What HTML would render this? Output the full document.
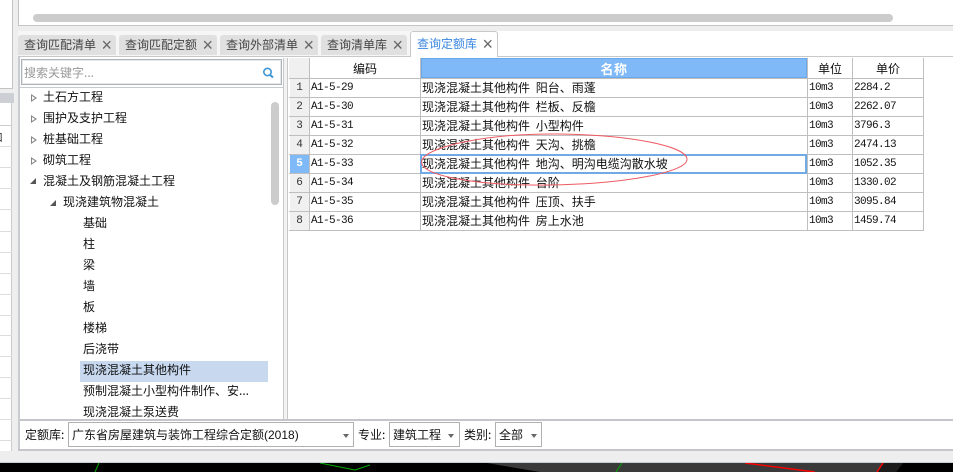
<!DOCTYPE html>
<html><head><meta charset="utf-8">
<style>
html,body{margin:0;padding:0;background:#fff}
#p{position:relative;width:953px;height:472px;overflow:hidden;background:#fff;font:12px/16px "WenQuanYi Zen Hei","Noto Sans CJK SC",sans-serif;color:#111}
#p div{position:absolute;box-sizing:border-box;white-space:nowrap}
.tab{top:35px;height:20px;background:#e0e0e0;border-radius:3px 3px 0 0;color:#444;padding:2px 0 0 6px;font-size:12px}
.tab b{position:absolute;top:1px;right:4px;font:400 18px/18px "Liberation Sans",sans-serif;color:#666}
.ti{left:0;height:21px;line-height:20px}
.h{background:#bfbfbf;height:1px}
.v{background:#bfbfbf;width:1px}
.rh{left:290px;width:19px;text-align:center;font:11px/19px "Liberation Mono",monospace;color:#333;background:#f0f0f0;height:18px}
.c{font:11px/19px "Liberation Mono",monospace;letter-spacing:-.6px;height:19px;margin-top:1px}
.n{left:422px;font-size:12px;line-height:18px;height:19px;word-spacing:3px}
.hd{top:59px;height:20px;line-height:20px;text-align:center;font-size:12px}
.sel{background:#fff;border:1px solid #b0b0b0;top:422px;height:25px;line-height:23px;padding-left:3px}
.ar{width:0;height:0;border:3px solid transparent;border-top:4px solid #666;border-bottom:0}
.o{width:0;height:0;border-left:6px solid #888;border-top:4px solid transparent;border-bottom:4px solid transparent}
.o::after{content:"";position:absolute;left:-5px;top:-2px;border-left:3px solid #fff;border-top:2px solid transparent;border-bottom:2px solid transparent}
.d{width:0;height:0;border-bottom:6px solid #555;border-left:6px solid transparent}
</style></head><body>
<div id="p">
<!-- far-left strip -->
<div style="left:0;top:0;width:18px;height:463px;background:#eee"></div>
<div style="left:0;top:0;width:13px;height:89px;background:#fff;border-right:1px solid #c4c4c4;border-bottom:1px solid #c4c4c4"></div>
<div style="left:0;top:93px;width:14px;height:10px;background:#ccd0d4"></div>
<div style="left:0;top:103px;width:12px;height:360px;background:#fff;border-right:1px solid #ccc"></div>
<div style="left:0;top:125px;width:12px;height:1px;background:#ccc"></div>
<div style="left:0;top:146px;width:12px;height:1px;background:#ddd"></div>
<div style="left:0;top:167px;width:12px;height:1px;background:#ddd"></div>
<div style="left:0;top:188px;width:12px;height:1px;background:#ddd"></div>
<div style="left:0;top:209px;width:12px;height:1px;background:#ddd"></div>
<div style="left:0;top:231px;width:12px;height:1px;background:#ddd"></div>
<div style="left:0;top:252px;width:12px;height:1px;background:#ddd"></div>
<div style="left:0;top:273px;width:12px;height:1px;background:#ddd"></div>
<div style="left:0;top:294px;width:12px;height:1px;background:#ddd"></div>
<div style="left:0;top:315px;width:12px;height:1px;background:#ddd"></div>
<div style="left:0;top:335px;width:12px;height:1px;background:#ddd"></div>
<div style="left:0;top:356px;width:12px;height:1px;background:#ddd"></div>
<div style="left:0;top:377px;width:12px;height:1px;background:#ddd"></div>
<div style="left:0;top:398px;width:12px;height:1px;background:#ddd"></div>
<div style="left:0;top:419px;width:12px;height:1px;background:#ddd"></div>
<div style="left:0;top:440px;width:12px;height:1px;background:#ddd"></div>
<div style="left:-8px;top:131px;font-size:11px;line-height:12px;color:#333">口</div>
<!-- top panel -->
<div style="left:18px;top:0;width:935px;height:26px;background:#fff;border-left:1px solid #c4c4c4;border-bottom:1px solid #c4c4c4"></div>
<div style="left:33px;top:14px;width:860px;height:8px;background:#ccc;border-radius:4px"></div>
<div style="left:18px;top:26px;width:935px;height:5px;background:#eee"></div>
<div style="left:18px;top:31px;width:392px;height:25px;background:#f6f6f6"></div>
<!-- tabs -->
<div class="tab" style="left:18px;width:98px">查询匹配清单<b>×</b></div>
<div class="tab" style="left:119px;width:98px">查询匹配定额<b>×</b></div>
<div class="tab" style="left:220px;width:98px">查询外部清单<b>×</b></div>
<div class="tab" style="left:321px;width:86px">查询清单库<b>×</b></div>
<div class="tab" style="left:410px;top:31px;width:88px;height:26px;background:#fff;border:1px solid #c8c8c8;border-bottom:0;color:#3a86e0;padding:4px 0 0 6px">查询定额库<b style="top:3px">×</b></div>
<div style="left:18px;top:56px;width:392px;height:2px;background:#c8c8c8"></div>
<div style="left:498px;top:56px;width:455px;height:2px;background:#c8c8c8"></div>
<!-- main -->
<div style="left:18px;top:57px;width:935px;height:393px;background:#fff;border-left:2px solid #c8ccd0"></div>
<!-- tree -->
<div style="left:283px;top:58px;width:5px;height:361px;background:#f2f2f2;border-left:1px solid #c8c8c8;border-right:1px solid #c8c8c8"></div>
<div style="left:21px;top:59px;width:261px;height:26px;border:1px solid #aab2ba;box-shadow:inset 0 0 0 1px #e8e8e8;color:#999;padding:5px 0 0 2px">搜索关键字...</div>
<svg style="position:absolute;left:261px;top:66px" width="14" height="14" viewBox="0 0 14 14"><circle cx="6.5" cy="6" r="3.7" fill="none" stroke="#3f97d6" stroke-width="1.6"/><path d="M9 8.8L12 11.5" stroke="#3f97d6" stroke-width="2"/></svg>
<div style="left:20px;top:87px;width:263px;height:1px;background:#c8ccd0"></div>
<div style="left:271px;top:102px;width:8px;height:103px;background:#ccc;border-radius:4px"></div>
<div style="left:80px;top:361px;width:188px;height:21px;background:#c7d8ef"></div>
<div class="o" style="left:31px;top:94px"></div><div class="ti" style="left:43px;top:87px">土石方工程</div>
<div class="o" style="left:31px;top:115px"></div><div class="ti" style="left:43px;top:108px">围护及支护工程</div>
<div class="o" style="left:31px;top:136px"></div><div class="ti" style="left:43px;top:129px">桩基础工程</div>
<div class="o" style="left:31px;top:157px"></div><div class="ti" style="left:43px;top:150px">砌筑工程</div>
<div class="d" style="left:30px;top:178px"></div><div class="ti" style="left:43px;top:171px">混凝土及钢筋混凝土工程</div>
<div class="d" style="left:50px;top:200px"></div><div class="ti" style="left:63px;top:192px">现浇建筑物混凝土</div>
<div class="ti" style="left:83px;top:213px">基础</div>
<div class="ti" style="left:83px;top:234px">柱</div>
<div class="ti" style="left:83px;top:255px">梁</div>
<div class="ti" style="left:83px;top:276px">墙</div>
<div class="ti" style="left:83px;top:297px">板</div>
<div class="ti" style="left:83px;top:318px">楼梯</div>
<div class="ti" style="left:83px;top:339px">后浇带</div>
<div class="ti" style="left:83px;top:360px">现浇混凝土其他构件</div>
<div class="ti" style="left:83px;top:381px">预制混凝土小型构件制作、安...</div>
<div class="ti" style="left:83px;top:402px;height:17px;overflow:hidden">现浇混凝土泵送费</div>
<!-- grid -->
<div style="left:289px;top:58px;width:20px;height:20px;background:#f0f0f0"></div>
<div style="left:421px;top:58px;width:386px;height:20px;background:#7fb9f8;border:1px solid #6aa8ea"></div>
<div class="hd" style="left:310px;width:110px">编码</div>
<div class="hd" style="left:421px;width:386px;color:#fff;font-weight:700;font-size:13px;letter-spacing:.5px;font-family:'Noto Sans CJK SC',sans-serif">名称</div>
<div class="hd" style="left:808px;width:44px">单位</div>
<div class="hd" style="left:853px;width:70px">单价</div>
<div class="rh" style="top:79px">1</div><div class="rh" style="top:98px">2</div><div class="rh" style="top:117px">3</div><div class="rh" style="top:136px">4</div>
<div class="rh" style="top:155px;background:#7fb9f8;color:#fff;font-weight:700">5</div>
<div class="rh" style="top:174px">6</div><div class="rh" style="top:193px">7</div><div class="rh" style="top:212px">8</div>
<div class="h" style="left:289px;top:78px;width:635px"></div>
<div class="h" style="left:289px;top:97px;width:635px"></div>
<div class="h" style="left:289px;top:116px;width:635px"></div>
<div class="h" style="left:289px;top:135px;width:635px"></div>
<div class="h" style="left:289px;top:154px;width:635px"></div>
<div class="h" style="left:289px;top:173px;width:635px"></div>
<div class="h" style="left:289px;top:192px;width:635px"></div>
<div class="h" style="left:289px;top:211px;width:635px"></div>
<div class="h" style="left:289px;top:230px;width:635px"></div>
<div class="v" style="left:309px;top:58px;height:173px"></div>
<div class="v" style="left:420px;top:58px;height:173px"></div>
<div class="v" style="left:807px;top:58px;height:173px"></div>
<div class="v" style="left:852px;top:58px;height:173px"></div>
<div class="v" style="left:923px;top:58px;height:173px"></div>
<div style="left:420px;top:154px;width:387px;height:20px;border:2px solid #6fa9e6"></div>

<div class="c" style="left:311px;top:78px">A1-5-29</div><div class="n" style="top:79px">现浇混凝土其他构件 阳台、雨蓬</div><div class="c" style="left:809px;top:78px">10m3</div><div class="c" style="left:854px;top:78px">2284.2</div>
<div class="c" style="left:311px;top:97px">A1-5-30</div><div class="n" style="top:98px">现浇混凝土其他构件 栏板、反檐</div><div class="c" style="left:809px;top:97px">10m3</div><div class="c" style="left:854px;top:97px">2262.07</div>
<div class="c" style="left:311px;top:116px">A1-5-31</div><div class="n" style="top:117px">现浇混凝土其他构件 小型构件</div><div class="c" style="left:809px;top:116px">10m3</div><div class="c" style="left:854px;top:116px">3796.3</div>
<div class="c" style="left:311px;top:135px">A1-5-32</div><div class="n" style="top:136px">现浇混凝土其他构件 天沟、挑檐</div><div class="c" style="left:809px;top:135px">10m3</div><div class="c" style="left:854px;top:135px">2474.13</div>
<div class="c" style="left:311px;top:154px">A1-5-33</div><div class="n" style="top:155px">现浇混凝土其他构件 地沟、明沟电缆沟散水坡</div><div class="c" style="left:809px;top:154px">10m3</div><div class="c" style="left:854px;top:154px">1052.35</div>
<div class="c" style="left:311px;top:173px">A1-5-34</div><div class="n" style="top:174px">现浇混凝土其他构件 台阶</div><div class="c" style="left:809px;top:173px">10m3</div><div class="c" style="left:854px;top:173px">1330.02</div>
<div class="c" style="left:311px;top:192px">A1-5-35</div><div class="n" style="top:193px">现浇混凝土其他构件 压顶、扶手</div><div class="c" style="left:809px;top:192px">10m3</div><div class="c" style="left:854px;top:192px">3095.84</div>
<div class="c" style="left:311px;top:211px">A1-5-36</div><div class="n" style="top:212px">现浇混凝土其他构件 房上水池</div><div class="c" style="left:809px;top:211px">10m3</div><div class="c" style="left:854px;top:211px">1459.74</div>
<svg style="position:absolute;left:0;top:0" width="953" height="472"><path d="M422 160C428 146 490 133 560 134C630 135 686 146 687 159C688 172 625 184 550 185C480 186 416 176 422 160Z" fill="none" stroke="#ee5a62" stroke-width="1"/></svg>
<!-- bottom -->
<div style="left:20px;top:419px;width:933px;height:2px;background:#c4c6ca"></div>
<div style="left:25px;top:427px">定额库:</div>
<div class="sel" style="left:68px;width:286px">广东省房屋建筑与装饰工程综合定额<span style="font-family:'Liberation Sans',sans-serif">(2018)</span></div>
<div class="ar" style="left:343px;top:434px"></div>
<div style="left:358px;top:427px">专业:</div>
<div class="sel" style="left:389px;width:71px">建筑工程</div>
<div class="ar" style="left:448px;top:434px"></div>
<div style="left:464px;top:427px">类别:</div>
<div class="sel" style="left:495px;width:47px">全部</div>
<div class="ar" style="left:531px;top:434px"></div>
<div style="left:18px;top:449px;width:935px;height:2px;background:#c4c6ca"></div>
<div style="left:0;top:451px;width:953px;height:12px;background:#eee"></div>
<div style="left:0;top:462px;width:953px;height:1px;background:#c8ccd4"></div>
<div style="left:0;top:463px;width:953px;height:9px;background:#000"></div>
<svg style="position:absolute;left:0;top:463px" width="953" height="9"><path d="M487 0L903 0L896 9L540 9Z" fill="#3a3a3a"/><path d="M883 0L903 0L896 9L877 9Z" fill="#1c1c1c"/><path d="M745 0L815 9" stroke="#f00" stroke-width="1.4"/><path d="M883 0L877 9" stroke="#f00" stroke-width="1.4"/><path d="M99 0L95 9" stroke="#0a0" stroke-width="1"/><path d="M320 0L355 7M355 7L370 2" stroke="#0a0" stroke-width="1"/><path d="M622 0L616 9" stroke="#0a0" stroke-width="1"/></svg>
</div>
</body></html>
